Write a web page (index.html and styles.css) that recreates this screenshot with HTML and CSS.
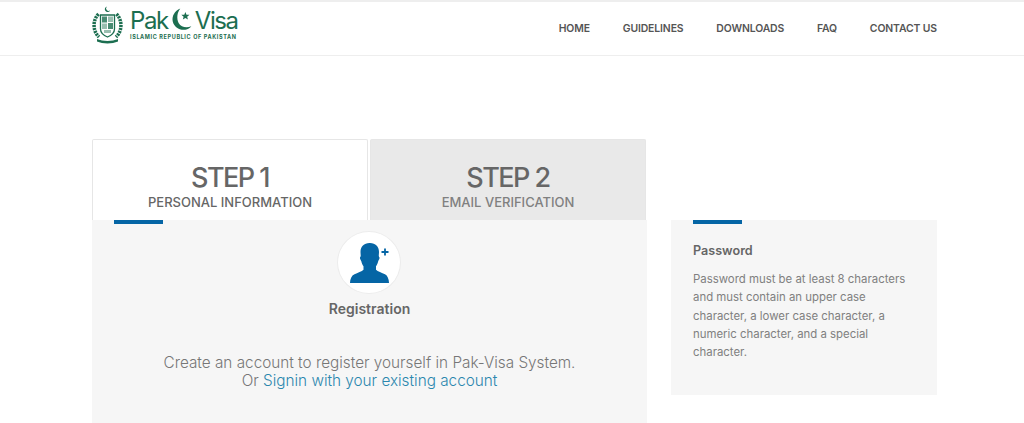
FILE: index.html
```html
<!DOCTYPE html>
<html lang="en">
<head>
    <meta charset="UTF-8">
    <meta name="viewport" content="width=device-width, initial-scale=1.0">
    <title>Pak-Visa</title>
    <link rel="stylesheet" href="styles.css">
</head>
<body>
    <!-- Header -->
    <header class="site-header">
        <div class="wrap header-row">
            <a class="logo" href="#">
                <svg class="emblem" width="31" height="38" viewBox="0 0 31 38">
                    <path d="M15 0.500a2.800 2.800 0 1 0 3.200 3.800a2.300 2.300 0 1 1-3.200-3.800z" fill="#1c6e50"/>
                    <g fill="none" stroke="#1c6e50" stroke-width="3.500" stroke-dasharray="2.200 .8">
                        <path d="M6.500 8C.5 14 .5 25 7 31"/>
                        <path d="M24.500 8C30.500 14 30.500 25 24 31"/>
                    </g>
                    <path d="M8.500 9h14v14c0 4-3.500 6.500-7 8-3.500-1.500-7-4-7-8z" fill="#fff" stroke="#1c6e50" stroke-width="1.300"/>
                    <path d="M10 10.500h5v6h-5zM16 17h5v6h-5z" fill="#1c6e50" opacity=".8"/>
                    <path d="M16 10.500h5v5.500h-5zM10 17.500h5v5.500h-5zM12 24h7v3h-7z" fill="#1c6e50" opacity=".45"/>
                    <path d="M5 33c6 2.500 15 2.500 21 0v2.500c-6 2.500-15 2.500-21 0z" fill="#1c6e50"/>
                </svg>
                <span class="logo-text">
                    <span class="logo-name">Pak<svg class="crescent" width="22" height="25" viewBox="0 0 26 28"><path d="M11 1C4 4 1 10 2 16c1.500 7 8 11 15 10 3-.5 5.500-2 7-4-6 2.500-12 1-15-4C6.500 13 7 6 11 1z" fill="#1c6e50"/><path d="M17 5l1.300 3.300 3.500.2-2.700 2.200.9 3.400-3-1.900-3 1.900.9-3.400-2.700-2.200 3.500-.2z" fill="#1c6e50"/></svg>Visa</span>
                    <span class="logo-tag">ISLAMIC REPUBLIC OF PAKISTAN</span>
                </span>
            </a>
            <nav class="main-nav">
                <a href="#">HOME</a>
                <a href="#">GUIDELINES</a>
                <a href="#">DOWNLOADS</a>
                <a href="#">FAQ</a>
                <a href="#">CONTACT US</a>
            </nav>
        </div>
    </header>

    <main class="wrap content">
        <section class="left-col">
            <div class="tabs">
                <div class="tab active">
                    <h2>STEP 1</h2>
                    <p>PERSONAL INFORMATION</p>
                </div>
                <div class="tab">
                    <h2>STEP 2</h2>
                    <p>EMAIL VERIFICATION</p>
                </div>
            </div>
            <div class="panel reg-panel">
                <span class="accent"></span>
                <div class="avatar">
                    <svg width="44" height="44" viewBox="0 0 44 44">
                        <path d="M22.500 2c-5.500 0-9 3.500-9 9 0 1.500.3 3 .2 4-.1.800-.8 1-.7 2.200.1 1.300 1 1.800 1.300 3 .5 2 1.200 3.800 2.200 5v3.500c-1.500 1.800-6 3-9 4.500C4.500 34.500 3 38 3 42h39c0-4-1.500-7.500-4-8.800-3-1.500-7.500-2.700-9-4.500v-3.500c1-1.200 1.700-3 2.200-5 .3-1.200 1.200-1.700 1.300-3 .1-1.200-.6-1.400-.7-2.200-.1-1 .2-2.500.2-4 0-5.500-3.500-9-9-9z" fill="#0565a5"/>
                        <path d="M38 7.500v7M34.500 11h7" stroke="#0565a5" stroke-width="1.800" fill="none"/>
                    </svg>
                </div>
                <h3>Registration</h3>
                <p class="reg-text">Create an account to register yourself in Pak-Visa System.<br>Or <a href="#">Signin with your existing account</a></p>
            </div>
        </section>
        <aside class="panel side-panel">
            <span class="accent"></span>
            <h4>Password</h4>
            <p>Password must be at least 8 characters<br>and must contain an upper case<br>character, a lower case character, a<br>numeric character, and a special<br>character.</p>
        </aside>
    </main>
</body>
</html>
```

FILE: styles.css
```css
html, body {
    margin: 0;
    padding: 0;
    height: 423px;
    overflow: hidden;
}

body {
    background: #fff;
    font-family: 'Inter', 'Liberation Sans', sans-serif;
    color: #666;
}

h2, h3, h4, p {
    margin: 0;
}

a {
    text-decoration: none;
}

.wrap {
    width: 845px;
    margin-left: 92px;
}

/* Header */
.site-header {
    height: 53px;
    border-top: 2px solid #eee;
    border-bottom: 1px solid #eee;
    background: #fff;
}

.header-row {
    display: flex;
    justify-content: space-between;
    align-items: center;
    height: 100%;
}

.logo {
    display: flex;
    align-items: center;
    gap: 7px;
    color: #1c6e50;
    margin-top: -8px;
}

.logo-text {
    display: flex;
    flex-direction: column;
}

.logo-name {
    display: flex;
    align-items: center;
    font-size: 24px;
    line-height: 25px;
    letter-spacing: -1.4px;
    height: 25px;
}

.crescent {
    margin: -2px 2px 0 3px;
}

.logo-tag {
    font-size: 5.500px;
    font-weight: 700;
    letter-spacing: 0.62px;
    line-height: 8px;
    white-space: nowrap;
}

.main-nav {
    display: flex;
    gap: 32.800px;
    margin-top: 1px;
}

.main-nav a {
    font-size: 10.400px;
    font-weight: 600;
    letter-spacing: -0.1px;
    color: #555;
    line-height: 16px;
}

/* Content */
.content {
    display: flex;
    gap: 24px;
    padding-top: 83px;
}

.left-col {
    width: 555px;
}

.tabs {
    display: flex;
    gap: 2px;
    height: 81px;
}

.tab {
    width: 276px;
    box-sizing: border-box;
    background: #e9e9e9;
    border: 1px solid #e6e6e6;
    border-bottom: none;
    border-radius: 2px 2px 0 0;
    text-align: center;
    padding-top: 22px;
    color: #808080;
}

.tab.active {
    background: #fff;
    color: #666;
}

.tab h2 {
    font-size: 27px;
    font-weight: 500;
    letter-spacing: -1.5px;
    line-height: 31px;
    color: #666;
}

.tab p {
    font-size: 13px;
    font-weight: 500;
    line-height: 18px;
}

.panel {
    background: #f6f6f6;
    position: relative;
}

.accent {
    position: absolute;
    top: 0;
    width: 49px;
    height: 4px;
    background: #0565a5;
}

.reg-panel {
    height: 204px;
    text-align: center;
    padding-top: 11px;
    box-sizing: border-box;
}

.reg-panel .accent {
    left: 22px;
}

.avatar {
    width: 64px;
    height: 63px;
    box-sizing: border-box;
    margin: 0 0 0 245px;
    border-radius: 50%;
    background: #fff;
    border: 1px solid #ececec;
    display: flex;
    align-items: center;
    justify-content: center;
}

.reg-panel h3 {
    font-size: 14px;
    font-weight: 600;
    line-height: 20px;
    margin-top: 5px;
    color: #666;
}

.reg-text {
    font-size: 15.300px;
    font-weight: 300;
    line-height: 18px;
    margin-top: 35px;
    color: #777;
}

.reg-text a {
    color: #2b87ae;
}

.side-panel {
    width: 266px;
    height: 175px;
    margin-top: 81px;
    padding: 22px 22px 0;
    box-sizing: border-box;
}

.side-panel .accent {
    left: 22px;
}

.side-panel h4 {
    font-size: 12.600px;
    font-weight: 600;
    line-height: 18px;
    color: #666;
}

.side-panel p {
    font-size: 11.400px;
    line-height: 18.300px;
    margin-top: 10px;
    color: #808080;
    white-space: nowrap;
}
```
